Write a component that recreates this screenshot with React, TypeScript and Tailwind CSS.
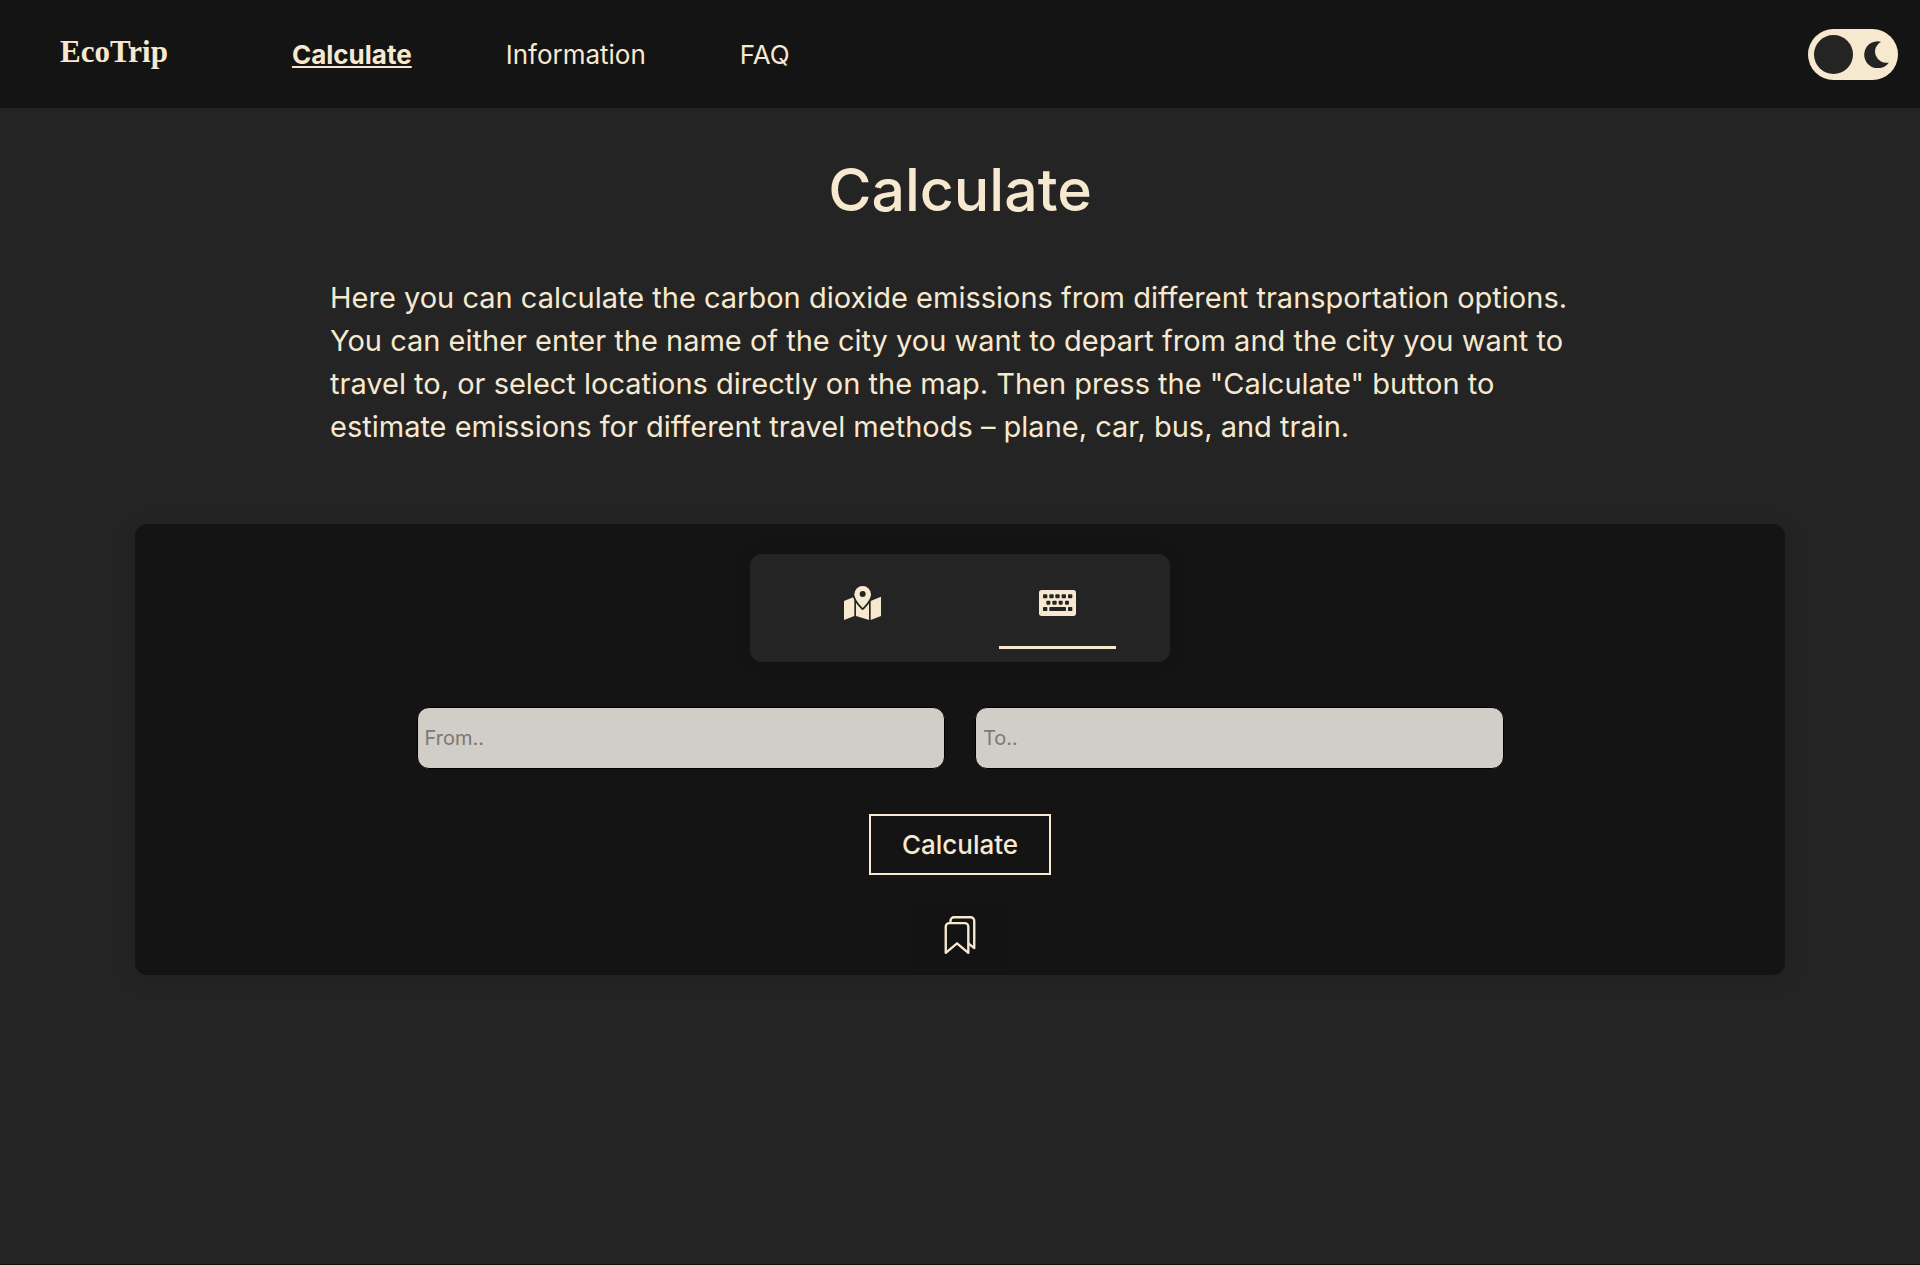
import { useState } from "react";
import type { ReactNode } from "react";
import { IoBookmarksOutline } from "react-icons/io5";

function MapIcon() {
  return (
    <svg viewBox="12 12 111 102" className="h-[34px] w-[37px]" aria-hidden="true">
      <g fill="currentColor">
        <path d="M12 57 43 44V102L12 114Z" />
        <path d="M48 50H87V114L48 102Z" />
        <path d="M92 57 123 44V102L92 114Z" />
      </g>
      <path
        d="M68 12A25 25 0 0 0 43 37C43 51 60 70 68 78C76 70 93 51 93 37A25 25 0 0 0 68 12Z"
        fill="currentColor"
        stroke="#242424"
        strokeWidth="11"
        strokeLinejoin="round"
        paintOrder="stroke"
      />
      <circle cx="68" cy="36" r="9" fill="#242424" />
    </svg>
  );
}

const keys = [
  [21, 25, 13], [40, 25, 13], [58, 25, 13], [77, 25, 13], [96, 25, 13],
  [31, 44, 12], [49, 44, 13], [68, 44, 12], [87, 44, 12],
  [21, 63, 13], [40, 63, 50], [96, 63, 13],
];

function KeyboardIcon() {
  return (
    <svg viewBox="9 12 111 78" className="h-[26px] w-[37px]" aria-hidden="true">
      <rect x="9" y="12" width="111" height="78" rx="8" fill="currentColor" />
      {keys.map(([x, y, w]) => (
        <rect key={`${x}-${y}`} x={x} y={y} width={w} height="12" rx="2.5" fill="#242424" />
      ))}
    </svg>
  );
}

function MoonIcon() {
  return (
    <svg viewBox="252 92 75 82" className="h-[27px] w-[25px]" aria-hidden="true">
      <path d="M303 94A41 41 0 1 0 327 157A34 34 0 0 1 303 94Z" fill="#242424" />
    </svg>
  );
}

function Tab({ label, active, onClick, children }: { label: string; active: boolean; onClick: () => void; children: ReactNode }) {
  return (
    <button
      type="button"
      aria-label={label}
      aria-pressed={active}
      onClick={onClick}
      className={`flex h-[95px] w-[117px] items-center justify-center border-b-[3px] pt-1.5 ${active ? "border-[#f7e9d0]" : "border-transparent"}`}
    >
      {children}
    </button>
  );
}

export default function App() {
  const [mode, setMode] = useState("keyboard");
  const field =
    "h-[62px] min-w-0 flex-1 rounded-xl border border-black bg-[#d1cdc7] px-[7px] text-xl text-[#242424] placeholder:text-[#7b7875] placeholder:opacity-100";

  return (
    <div className="flex min-h-screen flex-col bg-[#242424] font-['Inter',sans-serif] text-[#f7e9d0]">
      <header className="flex h-[108px] items-center bg-[#141414] pr-[22px] pl-[60px]">
        <a href="#home" className="mr-[124px] pb-1 font-['Liberation_Serif',serif] text-[31px] font-bold">
          EcoTrip
        </a>
        <nav className="flex items-center gap-[94px] text-[26px]">
          <a href="#calculate" className="font-bold underline decoration-2 underline-offset-2">Calculate</a>
          <a href="#information">Information</a>
          <a href="#faq">FAQ</a>
        </nav>
        <button
          type="button"
          role="switch"
          aria-checked="true"
          aria-label="Dark mode"
          className="ml-auto flex h-[51px] w-[90px] items-center justify-between rounded-full bg-[#f7e9d0] pr-[9px] pl-1.5"
        >
          <span className="size-[39px] rounded-full bg-[#242424]" />
          <MoonIcon />
        </button>
      </header>

      <main className="flex flex-1 flex-col items-center px-[135px] pt-10">
        <h1 className="text-[59px] leading-[84px] font-medium">Calculate</h1>
        <p className="mt-11 w-full max-w-[1260px] text-[29px] leading-[43px]">
          Here you can calculate the carbon dioxide emissions from different transportation options. You can either
          enter the name of the city you want to depart from and the city you want to travel to, or select locations
          directly on the map. Then press the "Calculate" button to estimate emissions for different travel methods –
          plane, car, bus, and train.
        </p>

        <section className="mt-[76px] flex w-full flex-col items-center rounded-xl bg-[#141414] pt-[30px] shadow-[0_4px_24px_rgba(0,0,0,0.12)]">
          <div className="flex h-[108px] w-[420px] justify-center gap-[78px] rounded-xl bg-[#242424] shadow-[0_0_20px_rgba(0,0,0,0.12)]">
            <Tab label="Choose on map" active={mode === "map"} onClick={() => setMode("map")}>
              <MapIcon />
            </Tab>
            <Tab label="Type locations" active={mode === "keyboard"} onClick={() => setMode("keyboard")}>
              <KeyboardIcon />
            </Tab>
          </div>
          <form className="flex w-full flex-col items-center" onSubmit={(e) => e.preventDefault()}>
            <div className="mt-[45px] flex w-full max-w-[1087px] gap-[30px]">
              <input type="text" aria-label="From" placeholder="From.." className={field} />
              <input type="text" aria-label="To" placeholder="To.." className={field} />
            </div>
            <button type="submit" className="mt-[45px] h-[61px] border-2 border-[#f7e9d0] px-[31px] text-[26px] font-medium">
              Calculate
            </button>
          </form>
          <button type="button" aria-label="Saved trips" className="mt-[30px] flex h-[70px] w-[100px] items-center justify-center bg-[#131313] pb-2.5">
            <IoBookmarksOutline className="size-[38px]" />
          </button>
        </section>
      </main>
      <footer className="h-px bg-[#0f1010]" />
    </div>
  );
}
